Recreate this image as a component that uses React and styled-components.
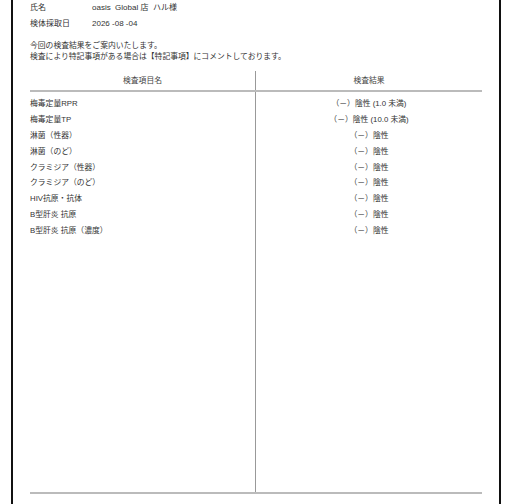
import React from 'react';
import styled, { createGlobalStyle } from 'styled-components';

const GlobalStyle = createGlobalStyle`
  html, body {
    margin: 0;
    padding: 0;
    background: #fff;
    overflow: hidden;
  }
  body {
    font-family: "Liberation Sans", "Noto Sans CJK JP", sans-serif;
    color: #333;
  }
`;

const Sheet = styled.div`
  box-sizing: border-box;
  margin-left: 11px;
  width: 490px;
  height: 504px;
  border-left: 2px solid #111;
  border-right: 2px solid #111;
  padding: 0 17px 10px 17px;
  display: flex;
  flex-direction: column;
`;

const InfoRow = styled.div`
  display: flex;
  font-size: 8px;
  line-height: 16px;
`;

const InfoLabel = styled.div`
  width: 62px;
`;

const Notice = styled.p`
  margin: 8px 0 0;
  font-size: 7.8px;
  line-height: 11px;
`;

const Table = styled.div`
  margin-top: 9px;
  flex: 1;
  display: flex;
  flex-direction: column;
`;

const Cols = styled.div`
  display: grid;
  grid-template-columns: 225px 1fr;
  border-bottom: 2px solid #bbb;
`;

const HeadCell = styled.div`
  height: 19px;
  line-height: 19px;
  text-align: center;
  font-size: 7.8px;
  color: #444;
  border-left: ${p => (p.$divided ? '1.5px solid #999' : 'none')};
`;

const BodyCols = styled(Cols)`
  flex: 1;
`;

const BodyCell = styled.div`
  padding-top: 4px;
  text-align: ${p => (p.$center ? 'center' : 'left')};
  border-left: ${p => (p.$divided ? '1.5px solid #999' : 'none')};
`;

const Line = styled.div`
  height: 15.875px;
  line-height: 15.875px;
  font-size: 7.8px;
  color: #333;
  white-space: nowrap;
`;

const items = [
  ['梅毒定量RPR', '（－）陰性 (1.0 未満)'],
  ['梅毒定量TP', '（－）陰性 (10.0 未満)'],
  ['淋菌（性器）', '（－）陰性'],
  ['淋菌（のど）', '（－）陰性'],
  ['クラミジア（性器）', '（－）陰性'],
  ['クラミジア（のど）', '（－）陰性'],
  ['HIV抗原・抗体', '（－）陰性'],
  ['B型肝炎 抗原', '（－）陰性'],
  ['B型肝炎 抗原（濃度）', '（－）陰性'],
];

export default function App() {
  return (
    <>
      <GlobalStyle />
      <Sheet>
        <InfoRow>
          <InfoLabel>氏名</InfoLabel>
          <div>oasis&nbsp; Global 店&nbsp; ハル様</div>
        </InfoRow>
        <InfoRow>
          <InfoLabel>検体採取日</InfoLabel>
          <div>2026 -08 -04</div>
        </InfoRow>
        <Notice>
          今回の検査結果をご案内いたします。
          <br />
          検査により特記事項がある場合は【特記事項】にコメントしております。
        </Notice>
        <Table>
          <Cols>
            <HeadCell>検査項目名</HeadCell>
            <HeadCell $divided>検査結果</HeadCell>
          </Cols>
          <BodyCols>
            <BodyCell>
              {items.map(([name]) => (
                <Line key={name}>{name}</Line>
              ))}
            </BodyCell>
            <BodyCell $divided $center>
              {items.map(([name, result]) => (
                <Line key={name}>{result}</Line>
              ))}
            </BodyCell>
          </BodyCols>
        </Table>
      </Sheet>
    </>
  );
}
